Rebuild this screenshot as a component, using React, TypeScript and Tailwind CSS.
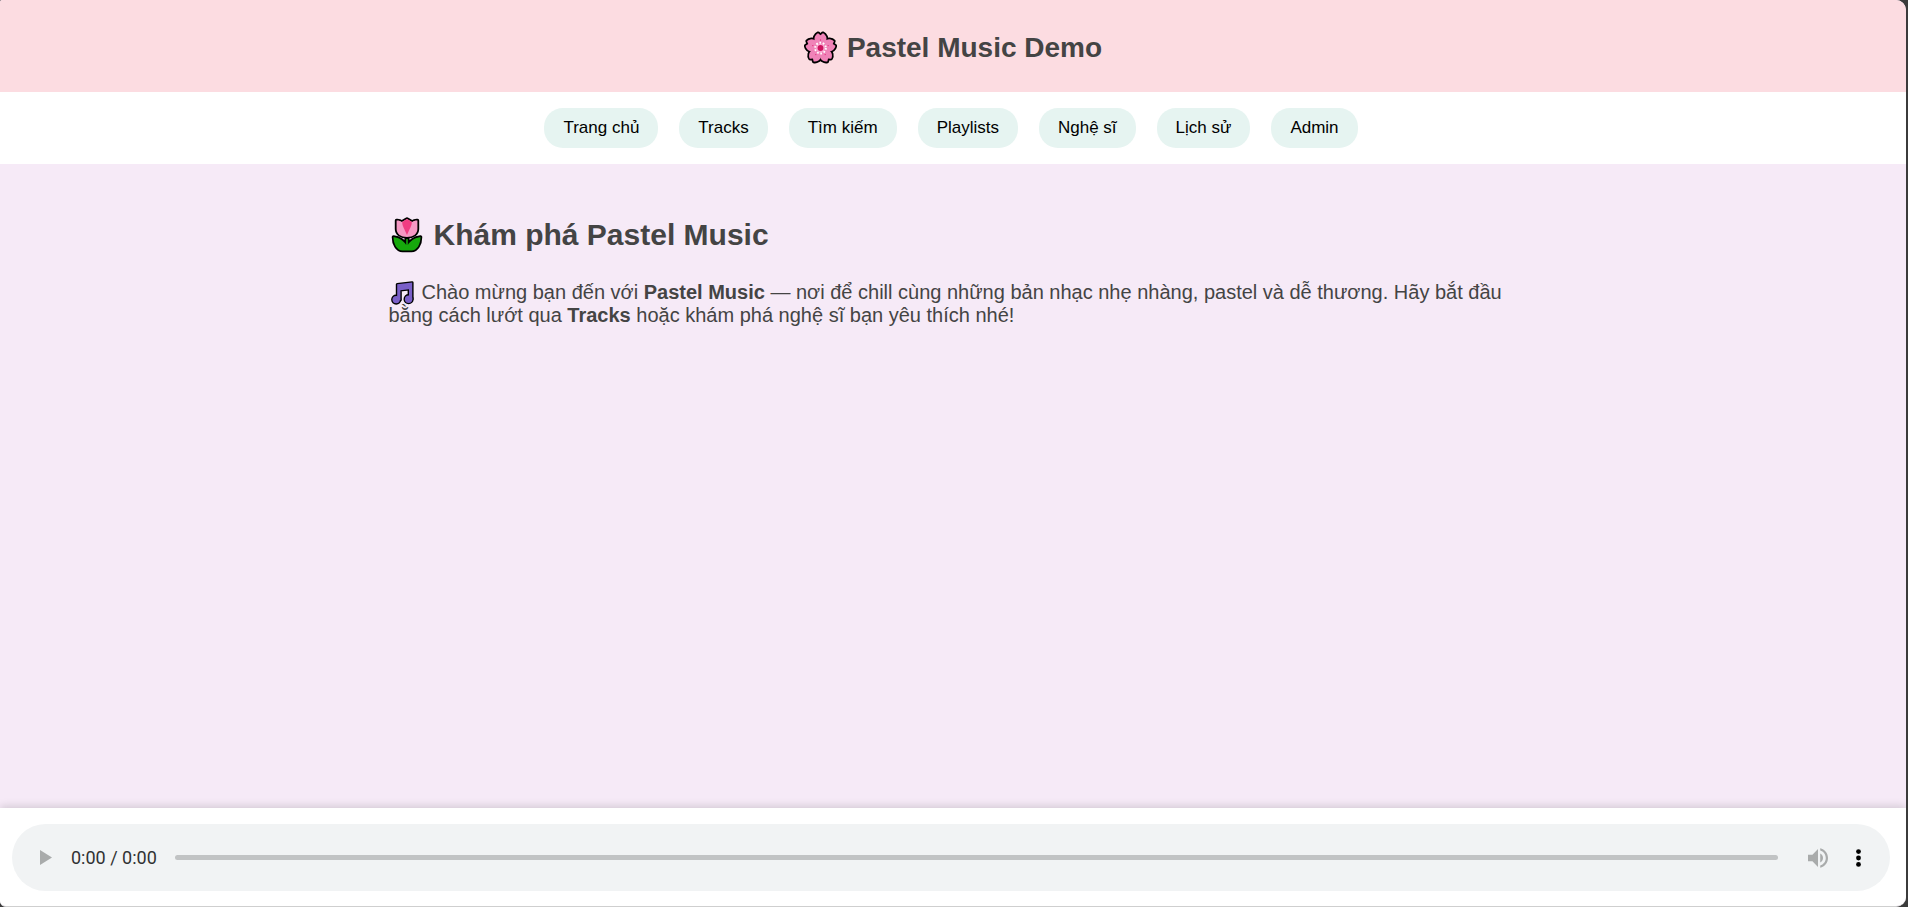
import { useState } from "react";

const NAV_ITEMS = ["Trang chủ", "Tracks", "Tìm kiếm", "Playlists", "Nghệ sĩ", "Lịch sử", "Admin"];

const PETAL =
  "M17 18C13 15 9.2 9.5 10.8 5.2C11.5 3.6 12.8 2 14.4 1.4L17 3.6L19.6 1.4C21.2 2 22.5 3.6 23.2 5.2C24.8 9.5 21 15 17 18Z";
const PETAL_ANGLES = [0, 72, 144, 216, 288];

function Blossom() {
  return (
    <svg viewBox="-1 -1 36 36" className="size-[33px] shrink-0" aria-hidden="true">
      <g stroke="#000" strokeWidth="3.8" strokeLinejoin="round">
        {PETAL_ANGLES.map((a) => (
          <path key={a} d={PETAL} transform={`rotate(${a} 17 17.6)`} />
        ))}
      </g>
      <g fill="#f083b8">
        {PETAL_ANGLES.map((a) => (
          <path key={a} d={PETAL} transform={`rotate(${a} 17 17.6)`} />
        ))}
      </g>
      <circle cx="17" cy="17.6" r="8" fill="#f083b8" />
      <circle cx="17" cy="17.6" r="5.8" fill="none" stroke="#fff" strokeWidth="2.2" strokeDasharray="1.8 1.84" />
      <circle cx="17" cy="17.6" r="4.8" fill="#f9a6cf" />
      <g fill="#e3307c">
        {PETAL_ANGLES.map((a) => (
          <g key={a} transform={`rotate(${a} 17 17.6)`}>
            <circle cx="17" cy="8.8" r="0.7" />
          </g>
        ))}
      </g>
      <circle cx="17" cy="17.6" r="3.2" fill="#cf1460" />
    </svg>
  );
}

const TULIP_HEAD = "M5.6 3.6C7.5 3.4 9.4 4 10.8 5L16 2L21.2 5C22.6 4 24.5 3.4 26.4 3.6V12C26.4 17 22 20 16 20S5.6 17 5.6 12Z";
const TULIP_LEAVES =
  "M2.5 20C8 20.8 13 24 15.2 28V22H16.8V28C19 24 24 20.8 29.5 20C29.5 27 26 33.5 20.5 33.5H11.5C6 33.5 2.5 27 2.5 20Z";

function Tulip() {
  return (
    <svg viewBox="0 0 32 36" className="h-9 w-8 shrink-0" aria-hidden="true">
      <g stroke="#000" strokeWidth="3.6" strokeLinejoin="round">
        <path d={TULIP_HEAD} />
        <path d={TULIP_LEAVES} />
      </g>
      <path d={TULIP_LEAVES} fill="#16a80c" />
      <path d={TULIP_HEAD} fill="#f598c4" />
      <path d="M11.2 5L16 2L20.8 5C20.8 9 18.5 12 16 18C13.5 12 11.2 9 11.2 5Z" fill="#f03c82" />
    </svg>
  );
}

function Notes() {
  const shape = "M7.2 3.3L22.2 1.6V18H19V8.2L10.4 9.2V19H7.2Z";
  return (
    <svg viewBox="0 0 25 24" className="-my-1 mr-[7px] ml-px inline-block h-6 w-[25px] align-[-2px]" aria-hidden="true">
      <g stroke="#000" strokeWidth="2.8" strokeLinejoin="round">
        <path d={shape} />
        <circle cx="6.2" cy="18.6" r="3.7" />
        <circle cx="18.6" cy="18.2" r="3.7" />
      </g>
      <g fill="#7a5fc8">
        <path d={shape} />
        <circle cx="6.2" cy="18.6" r="3.7" />
        <circle cx="18.6" cy="18.2" r="3.7" />
      </g>
    </svg>
  );
}

function Player() {
  const [position, setPosition] = useState(0);
  return (
    <footer className="bg-white pt-4 pr-4 pb-[15px] pl-3 shadow-[0_-2px_8px_rgba(0,0,0,0.14)]">
      <div className="flex h-[67px] items-center rounded-full bg-[#f1f3f4] pr-3 pl-[18px]">
        <button type="button" aria-label="Play" className="flex size-8 items-center justify-center">
          <svg viewBox="0 0 12 15" className="h-[15px] w-3" fill="#a9abab" aria-hidden="true">
            <path d="M0 0L12 7.5L0 15Z" />
          </svg>
        </button>
        <span className="ml-[9px] font-[Roboto,sans-serif] text-[18px] text-[#303132]">0:00 / 0:00</span>
        <input
          type="range"
          aria-label="Seek"
          min={0}
          max={100}
          value={position}
          onChange={(e) => setPosition(Number(e.target.value))}
          className="mr-5 ml-[18px] h-[5px] min-w-0 flex-1 appearance-none rounded-full bg-[#c1c3c4] [&::-webkit-slider-thumb]:size-0 [&::-webkit-slider-thumb]:appearance-none"
        />
        <button type="button" aria-label="Mute" className="flex size-10 items-center justify-center">
          <svg viewBox="3 3 18 18" className="size-5" fill="#a9abab" aria-hidden="true">
            <path d="M3 9v6h4l5 5V4L7 9H3zm13.5 3c0-1.77-1.02-3.29-2.5-4.03v8.05c1.48-.73 2.5-2.25 2.5-4.02zM14 3.23v2.06c2.89.86 5 3.54 5 6.71s-2.11 5.85-5 6.71v2.06c4.01-.91 7-4.49 7-8.77s-2.99-7.86-7-8.77z" />
          </svg>
        </button>
        <button type="button" aria-label="More options" className="flex size-10 items-center justify-center">
          <svg viewBox="0 0 5 18" className="h-[18px] w-[5px]" aria-hidden="true">
            <circle cx="2.5" cy="2.6" r="2.4" />
            <circle cx="2.5" cy="9" r="2.4" />
            <circle cx="2.5" cy="15.4" r="2.4" />
          </svg>
        </button>
      </div>
    </footer>
  );
}

export default function App() {
  return (
    <div className="min-h-screen bg-[#3b3b3b] pr-[2px] font-['Liberation_Sans',Arial,sans-serif] text-[#444]">
      <div className="flex min-h-screen flex-col overflow-hidden rounded-tl-[2px] rounded-r-[10px] rounded-bl-md border-b border-[#cfcfcf] bg-[#f6eaf7]">
        <header className="flex h-[92px] items-center justify-center gap-[10px] bg-[#fcdce1] pt-[3px]">
          <Blossom />
          <h1 className="text-[28px] font-bold">Pastel Music Demo</h1>
        </header>
        <nav className="flex justify-center gap-[21px] bg-white py-4 pr-1">
          {NAV_ITEMS.map((item) => (
            <button
              key={item}
              type="button"
              className="h-10 rounded-[19px] bg-[#e6f4f1] px-[19px] text-[17px] text-black"
            >
              {item}
            </button>
          ))}
        </nav>
        <main className="flex-1 pr-1">
          <div className="mx-auto max-w-[1125px] pt-[53px]">
            <div className="flex items-center gap-[11px] pl-[2px]">
              <Tulip />
              <h2 className="text-[30px] leading-9 font-bold">Khám phá Pastel Music</h2>
            </div>
            <p className="mt-7 text-[20px] leading-[23px]">
              <Notes />
              Chào mừng bạn đến với <strong>Pastel Music</strong> — nơi để chill cùng những bản nhạc nhẹ nhàng, pastel và dễ
              thương. Hãy bắt đầu bằng cách lướt qua <strong>Tracks</strong> hoặc khám phá nghệ sĩ bạn yêu thích nhé!
            </p>
          </div>
        </main>
        <Player />
      </div>
    </div>
  );
}
